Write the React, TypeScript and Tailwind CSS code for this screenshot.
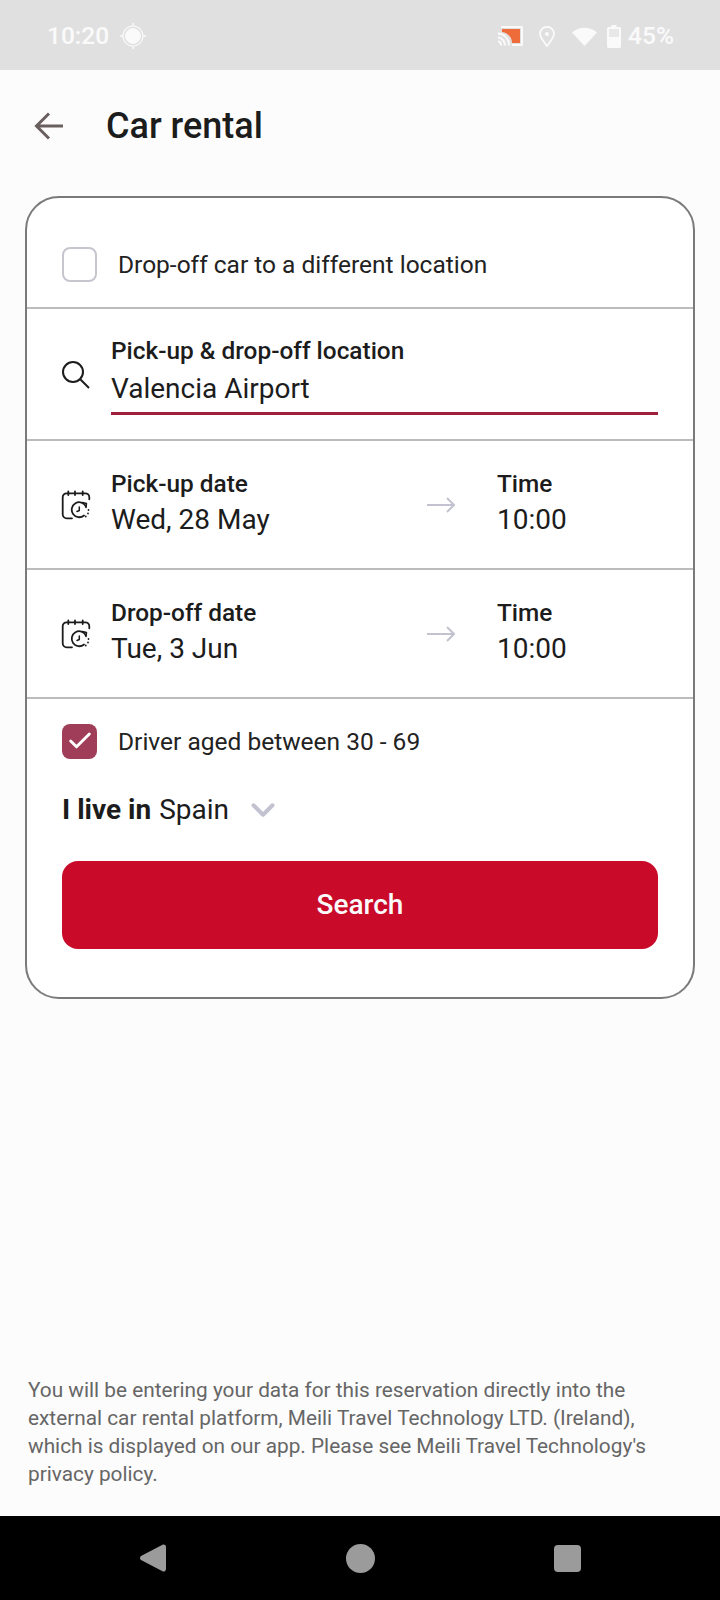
import { ChevronDown, Check } from "lucide-react";

function CalendarClock() {
  return (
    <svg width="32" height="30" viewBox="0 0 32 30" fill="none" stroke="#1c1c1c" strokeWidth="1.8" strokeLinecap="round" strokeLinejoin="round">
      <path d="M12 28.300H6.700a4 4 0 0 1-4-4V7.300a4 4 0 0 1 4-4h18.600a4 4 0 0 1 4 4v2" />
      <path d="M8.300 1.500v3.500M15 1.500v3.500M22.700 1.500v3.500" />
      <path d="M26 16.500a7.500 7.500 0 1 0-2 9" />
      <path d="M19.300 17v3.500l-2.300 1" strokeWidth="1.500" />
      <path d="M22.500 12.500l4 1-.5 4" strokeWidth="1.500" />
      <path d="M28.500 20v.1M28 23.500v.1M25.800 26.500v.1" />
    </svg>
  );
}

function DateRow({ label, value }: { label: string; value: string }) {
  return (
    <div className="flex h-[129px] items-center border-b-2 border-[#bcbcbc] pl-[33px]">
      <CalendarClock />
      <div className="ml-[19px] w-[316px] pb-[4px]">
        <div className="text-[24.400px] leading-[34px] font-medium text-[#1c1c1c]">{label}</div>
        <div className="mt-[1px] text-[28px] leading-[36px] text-[#1c1c1c]">{value}</div>
      </div>
      <svg width="28" height="16" viewBox="0 0 28 16" fill="none" stroke="#c2c2d0" strokeWidth="2">
        <path d="M0 8h27M20 1l7 7-7 7" />
      </svg>
      <div className="ml-[42px] pb-[4px]">
        <div className="text-[24.400px] leading-[34px] font-medium text-[#1c1c1c]">Time</div>
        <div className="mt-[1px] text-[28px] leading-[36px] text-[#1c1c1c]">10:00</div>
      </div>
    </div>
  );
}

export default function App() {
  return (
    <div className="flex min-h-[1600px] flex-col bg-[#fcfcfc] font-['Roboto',sans-serif]">
      {/* status bar */}
      <div className="flex h-[70px] items-center bg-[#e1e0e1] pl-[47px] pr-[46px] pt-[2px] text-[24.500px] font-medium text-[#fafafa]">
        <span>10:20</span>
        <svg className="ml-[10px]" width="28" height="28" viewBox="0 0 28 28" fill="none" stroke="#fafafa">
          <circle cx="14" cy="14" r="7.500" fill="#fafafa" />
          <circle cx="14" cy="14" r="10" strokeWidth="1.200" />
          <path d="M14 1v3M14 24v3M1 14h3M24 14h3" strokeWidth="1.500" />
        </svg>
        <div className="ml-auto flex items-center">
          <svg width="25" height="20" viewBox="0 0 25 20">
            <path d="M3 0h20.500A1.500 1.500 0 0 1 25 1.500v17a1.500 1.500 0 0 1-1.500 1.500H14v-2h9V2H3z" fill="#fafafa" />
            <path d="M4 3h18v14h-8C14 11 10 7 4 6z" fill="#ee6b3a" />
            <path d="M0 7.500c6 0 11 5 11 12M0 11.500c4 0 7 4 7 8M0 15.500c2 0 3 2 3 4" stroke="#fafafa" strokeWidth="2" fill="none" />
          </svg>
          <svg className="ml-[16px]" width="16" height="21" viewBox="0 0 16 21" fill="none" stroke="#fafafa" strokeWidth="1.800">
            <path d="M8 20C4 14.500 1 11.500 1 7.800a7 7 0 0 1 14 0c0 3.700-3 6.700-7 12.200z" />
            <circle cx="8" cy="8" r="2" fill="#fafafa" stroke="none" />
          </svg>
          <svg className="ml-[17px]" width="25" height="20" viewBox="0 0 25 20">
            <path d="M12.500 20L0 6.500C6.500 0 18.500 0 25 6.500z" fill="#fafafa" />
          </svg>
          <svg className="ml-[10px]" width="14" height="23" viewBox="0 0 14 23">
            <path d="M4.500 0h5v2h3A1.500 1.500 0 0 1 14 3.500V21.500a1.500 1.500 0 0 1-1.500 1.500H1.500A1.500 1.500 0 0 1 0 21.500V3.500A1.500 1.500 0 0 1 1.500 2h3z" fill="#fafafa" />
            <rect x="2" y="4" width="10" height="8" fill="#e9e8e9" />
          </svg>
          <span className="ml-[7px]">45%</span>
        </div>
      </div>

      {/* header */}
      <div className="flex h-[108px] items-center pl-[34px] pt-[3px]">
        <svg width="30" height="28" viewBox="0 0 30 28" fill="none" stroke="#6a5f5f" strokeWidth="3">
          <path d="M29 14H3M15 1.500L2.500 14 15 26.500" />
        </svg>
        <h1 className="ml-[42px] text-[36px] font-medium text-[#1c1c1c]">Car rental</h1>
      </div>

      {/* card */}
      <div className="mx-[25px] mt-[18px] rounded-[34px] border-2 border-[#7a7a7a] bg-white">
        <div className="flex h-[111px] items-center border-b-2 border-[#bcbcbc] pl-[35px] pt-[24px]">
          <div className="h-[35px] w-[35px] rounded-[8px] border-2 border-[#c6c6ce]" />
          <span className="ml-[21px] pt-[2px] text-[24.500px] text-[#222222]">Drop-off car to a different location</span>
        </div>

        <div className="flex h-[132px] items-center border-b-2 border-[#bcbcbc] pl-[34px] pr-[35px] pt-[1px]">
          <svg width="30" height="30" viewBox="0 0 30 30" fill="none" stroke="#1c1c1c" strokeWidth="2">
            <circle cx="12" cy="12" r="10" />
            <path d="M19.500 19.500L28 28" />
          </svg>
          <div className="ml-[20px] flex-1">
            <div className="text-[24.400px] leading-[34px] font-medium text-[#1c1c1c]">Pick-up &amp; drop-off location</div>
            <div className="mt-[2px] border-b-[3px] border-[#9f1f3d] pb-[4px] text-[28px] leading-[38px] text-[#1c1c1c]">Valencia Airport</div>
          </div>
        </div>

        <DateRow label="Pick-up date" value="Wed, 28 May" />
        <DateRow label="Drop-off date" value="Tue, 3 Jun" />

        <div className="px-[35px] pb-[48px] pt-[23px]">
          <div className="flex items-center">
            <div className="flex h-[35px] w-[35px] items-center justify-center rounded-[8px] bg-[#a03d58]">
              <Check size={28} color="#ffffff" strokeWidth={2.500} />
            </div>
            <span className="ml-[21px] pt-[2px] text-[24.500px] text-[#222222]">Driver aged between 30 - 69</span>
          </div>
          <div className="mt-[28px] flex items-center text-[28px] text-[#1c1c1c]">
            <span className="font-bold">I live in</span>
            <span className="ml-[8px]">Spain</span>
            <ChevronDown className="ml-[15px]" size={38} color="#c2c2d0" strokeWidth={2.500} />
          </div>
          <button className="mt-[30px] flex h-[88px] w-full items-center justify-center rounded-[16px] bg-[#c90a29] text-[28px] font-medium text-[#fafafa]">
            Search
          </button>
        </div>
      </div>

      {/* disclaimer */}
      <p className="mt-auto px-[28px] pb-[28px] text-[20.800px] leading-[28px] text-[#666666]">
        You will be entering your data for this reservation directly into the external car rental platform, Meili Travel Technology LTD. (Ireland), which is displayed on our app. Please see Meili Travel Technology's privacy policy.
      </p>

      {/* nav bar */}
      <div className="flex h-[84px] items-center justify-between bg-black px-[139px]">
        <svg width="28" height="30" viewBox="0 0 28 30">
          <path d="M24 1.500a2.500 2.500 0 0 1 3 2.500v22a2.500 2.500 0 0 1-3 2.500L2 17a2.500 2.500 0 0 1 0-4z" fill="#9b9b9b" />
        </svg>
        <div className="h-[29px] w-[29px] rounded-full bg-[#9b9b9b]" />
        <div className="h-[27px] w-[27px] rounded-[4px] bg-[#9b9b9b]" />
      </div>
    </div>
  );
}
